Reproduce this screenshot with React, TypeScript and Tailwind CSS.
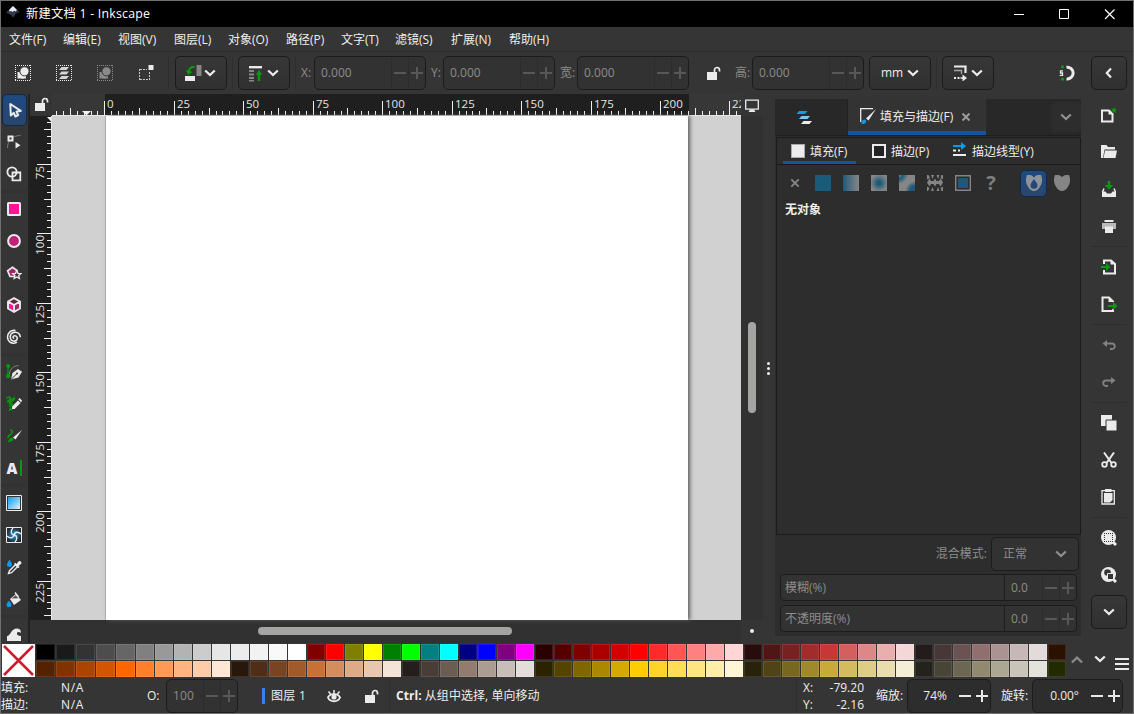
import type { ReactNode } from "react";
import clsx from "clsx";

const FG = "#ebebeb";
const GREEN = "#069a0c";
const BLUE = "#0c9bea";

const menus = [
  { label: "文件(F)", width: "w-[54px]" },
  { label: "编辑(E)", width: "w-[55px]" },
  { label: "视图(V)", width: "w-[56px]" },
  { label: "图层(L)", width: "w-[54px]" },
  { label: "对象(O)", width: "w-[58px]" },
  { label: "路径(P)", width: "w-[55px]" },
  { label: "文字(T)", width: "w-[54px]" },
  { label: "滤镜(S)", width: "w-[56px]" },
  { label: "扩展(N)", width: "w-[58px]" },
  { label: "帮助(H)", width: "w-[60px]" },
];

const paletteTop =
  "000000 1a1a1a 333333 4d4d4d 666666 808080 999999 b3b3b3 cccccc e6e6e6 ececec f2f2f2 f9f9f9 ffffff 800000 ff0000 808000 ffff00 008000 00ff00 008080 00ffff 000080 0000ff 800080 ff00ff 2b0000 550000 800000 aa0000 d40000 ff0000 ff2a2a ff5555 ff8080 ffaaaa ffd5d5 280b0b 501616 782121 a02c2c c83737 d35f5f de8787 e9afaf f4d7d7 241c1c 483737 6c5353 916f6f ac9393 c8b7b7 e3dbdb 2b1100".split(
    " ",
  );
const paletteBottom =
  "552200 803300 aa4400 d45500 ff6600 ff7f2a ff9955 ffb380 ffccaa ffe6d5 28170b 502d16 784421 a05a2c c87137 d38d5f deaa87 e9c6af f4e3d7 241f1c 483e37 6c5d53 917c6f ac9d93 c8beb7 e3dedb 2b2200 554400 806600 aa8800 d4aa00 ffcc00 ffd42a ffdd55 ffe680 ffeeaa fff6d5 28220b 504416 786721 a0892c c8ab37 d3bc5f decd87 e9ddaf f4eed7 24221c 484537 6c6753 918a6f aca793 c8c4b7 e3e2db 222b00".split(
    " ",
  );

interface IconProps {
  children: ReactNode;
  size?: number;
  className?: string;
}

function Icon({ children, size = 16, className }: IconProps) {
  return (
    <svg
      width={size}
      height={size}
      viewBox={`0 0 ${size} ${size}`}
      fill="none"
      className={clsx("shrink-0", className)}
    >
      {children}
    </svg>
  );
}

function Chevron({ color = FG, up = false, className }: { color?: string; up?: boolean; className?: string }) {
  return (
    <svg width="12" height="8" viewBox="0 0 12 8" fill="none" className={clsx("shrink-0", className)}>
      <path d={up ? "M.9 6.500 6 1.700l5.100 4.800" : "M1.200 1.500 6 6l4.800-4.500"} stroke={color} strokeWidth="2.300" />
    </svg>
  );
}

function OpenLock({ className }: { className?: string }) {
  return (
    <svg width="14" height="14" viewBox="0 0 14 14" fill="none" className={clsx("shrink-0", className)}>
      <path d="M0 6h10v8H0z" fill={FG} />
      <path d="M7.500 6.500V4a2.500 2.500 0 0 1 5 0v1.500" stroke={FG} strokeWidth="1.700" />
    </svg>
  );
}

function VSep({ className }: { className?: string }) {
  return <div className={clsx("h-[34px] w-px shrink-0 bg-[#2e2e2e]", className)} />;
}

function PlusMinus({ active = false }: { active?: boolean }) {
  const color = active ? "#e8e8e8" : "#585858";
  return (
    <>
      <div className="flex h-full w-[17px] shrink-0 items-center justify-center border-l border-[#2c2c2c]">
        <svg width="12" height="12" viewBox="0 0 12 12">
          <path d="M0 5h12v2H0z" fill={color} />
        </svg>
      </div>
      <div className="flex h-full w-[17px] shrink-0 items-center justify-center border-l border-[#2c2c2c]">
        <svg width="12" height="12" viewBox="0 0 12 12">
          <path d="M0 5h12v2H0zM5 0h2v12H5z" fill={color} />
        </svg>
      </div>
    </>
  );
}

function Spin({ value, className, active }: { value: string; className?: string; active?: boolean }) {
  return (
    <div
      className={clsx(
        "flex h-[34px] shrink-0 items-center rounded-[5px] border border-[#1c1c1c]",
        active ? "bg-[#2d2d2d] text-[#eeeeec]" : "bg-[#323232] text-[#8c8c8a]",
        className,
      )}
    >
      <span className={clsx("min-w-0 flex-1", active ? "pr-[9px] text-right" : "pl-1.5")}>{value}</span>
      <PlusMinus active={active} />
    </div>
  );
}

function ToolButton({ children, className }: { children: ReactNode; className?: string }) {
  return (
    <div
      className={clsx(
        "flex h-[34px] shrink-0 items-center rounded-[5px] border border-[#1b1b1b] bg-linear-to-b from-[#373737] to-[#303030]",
        className,
      )}
    >
      {children}
    </div>
  );
}

/* ---------- Title bar and menus ---------- */

function TitleBar() {
  return (
    <div className="flex h-[26px] shrink-0 items-center bg-black text-white">
      <svg width="14" height="14" viewBox="0 0 14 14" className="-mt-1 ml-[5px]">
        <path d="M7 1 13 6.600c.8.900-1.800 1.200-3.400 1.900L8.600 11 7 12.400 5 10 1.400 8.300C-.1 7.600.6 7 1.200 6.400z" fill="#303a4b" />
        <path d="M7 1 11 5 9.300 6.600 8 5.800 6.500 7 5 6 3.600 6.500 3 5z" fill="#e8ebef" />
      </svg>
      <span className="ml-1.5 text-[12.3px] tracking-[0.23px]">新建文档 1 - Inkscape</span>
      <svg width="112" height="20" viewBox="0 0 112 20" fill="none" stroke="#fff" className="ml-auto mr-[13px]">
        <path d="M6 10.500h10" />
        <path d="M51.500 5.500h9v9h-9z" />
        <path d="m97 5.500 9.500 9.500M106.500 5.500 97 15" strokeWidth="1.200" />
      </svg>
    </div>
  );
}

function MenuBar() {
  return (
    <div className="flex h-[25px] shrink-0 items-center border-b border-[#2d2d2d] pl-2 pt-px">
      {menus.map((menu) => (
        <span key={menu.label} className={clsx("shrink-0 whitespace-nowrap", menu.width)}>
          {menu.label}
        </span>
      ))}
    </div>
  );
}

/* ---------- Tool controls ---------- */

function DottedFrame({ color }: { color: string }) {
  return (
    <path
      d="M0 .500h16M0 15.500h16M.500 0v16M15.500 0v16"
      stroke={color}
      strokeDasharray="1 1"
    />
  );
}

function SelectionGlyph({ color }: { color: string }) {
  return (
    <Icon>
      <DottedFrame color={color} />
      <path d="M2.500 7H9v6.500H2.500z" fill={color} />
      <path d="M6 9h5v4.500H6z" fill={color} />
      <circle cx="9.500" cy="6.300" r="4.600" fill={color} stroke="#353535" />
    </Icon>
  );
}

function ControlsBar() {
  return (
    <div className="flex h-[42px] shrink-0 items-center text-[#8c8c8a]">
      <div className="ml-[14px] flex items-center">
        <SelectionGlyph color={FG} />
        <Icon className="ml-[25px]">
          <DottedFrame color={FG} />
          <path d="M5.500 2H13l-2.500 3H3zM5.500 6.500H13l-2.500 3H3zM5.500 11H13l-2.500 3H3z" fill="#d4d4d4" />
        </Icon>
        <div className="ml-[25px] flex">
          <SelectionGlyph color="#8a8a8a" />
        </div>
        <Icon className="ml-[25px]">
          <path d="M2 4.500h10M2 14.500h10M1.500 4v11M11.500 4v11" stroke="#c8c8c8" strokeDasharray="2 1" />
          <path d="M9 0h7v6H9z" fill="#353535" />
          <path d="M10.500 0h5v5h-5z" fill={FG} />
        </Icon>
      </div>
      <VSep className="ml-[14px]" />
      <ToolButton className="ml-[6px] w-[52px] pl-[9px]">
        <Icon size={18}>
          <path d="M0 12h10v5H0z" fill={FG} />
          <path d="M11.500 1h5v11h-5z" fill="#868686" />
          <path d="M9.500 3C6 2.500 4.300 4.500 4.200 7" stroke={GREEN} strokeWidth="2.200" />
          <path d="M1 5.500 7.500 8 3 11z" fill={GREEN} />
        </Icon>
        <Chevron className="ml-px" />
      </ToolButton>
      <VSep className="ml-[5px]" />
      <ToolButton className="ml-[5px] w-[52px] pl-[9px]">
        <Icon size={17}>
          <path d="M1 1h13v2.400H1z" fill={FG} />
          <path d="M1 5h5v2H1zM1 8.500h5v2H1zM1 12h5v2H1zM1 15h5v1.600H1z" fill="#878787" />
          <path d="M9.800 9h2.400v7H9.800z" fill={GREEN} />
          <path d="M11 4.500 14 10H8z" fill={GREEN} />
        </Icon>
        <Chevron className="ml-[2px]" />
      </ToolButton>
      <VSep className="ml-[5px]" />
      <span className="ml-[5px] w-[13px]">X:</span>
      <Spin value="0.000" className="w-[112px]" />
      <span className="ml-[5px] w-3">Y:</span>
      <Spin value="0.000" className="w-[112px]" />
      <span className="ml-[5px] w-[17px] whitespace-nowrap">宽:</span>
      <Spin value="0.000" className="w-[112px]" />
      <OpenLock className="ml-[18px]" />
      <span className="ml-[14px] w-[17px] whitespace-nowrap">高:</span>
      <Spin value="0.000" className="w-[112px]" />
      <ToolButton className="ml-[5px] w-[62px] pl-[11px] text-[#eeeeec]">
        mm
        <Chevron className="ml-auto mr-[11px]" />
      </ToolButton>
      <VSep className="ml-[5px]" />
      <ToolButton className="ml-[5px] w-[52px] pl-[11px]">
        <Icon>
          <path d="M0 1.500h11.500V8" stroke={FG} strokeWidth="2.200" />
          <path d="M0 5.500h7.500V9" stroke="#a8a8a8" strokeWidth="1.300" />
          <path d="M0 12h2v2H0zM3.500 12h2v2h-2zM6.500 12.200h3v1.600h-3zM8.500 9.500l4.500 3.500-4.500 3.500z" fill={FG} />
        </Icon>
        <Chevron className="ml-px" />
      </ToolButton>
      <Icon size={18} className="ml-[64px]">
        <path d="M8.500 3.200a5.900 5.900 0 1 1 0 11.700" stroke={FG} strokeWidth="3" />
        <circle cx="4.500" cy="2.800" r="1.600" fill={GREEN} />
        <circle cx="4.500" cy="15.200" r="1.600" fill={GREEN} />
        <path d="M5 6.800H2.500V9h2v2.400H1.700" stroke={FG} strokeWidth="1.300" />
      </Icon>
      <ToolButton className="ml-[15px] w-9 justify-center">
        <Icon size={12} className="-ml-px">
          <path d="M8 1.500 3.800 6 8 10.500" stroke={FG} strokeWidth="2.200" />
        </Icon>
      </ToolButton>
    </div>
  );
}

/* ---------- Toolbox ---------- */

const toolGroups: ReactNode[][] = [
  [
    <Icon key="selector">
      <path d="m3.300 2 .500 11.500 3-2.700 1.600 3.700 2.800-1.300-1.700-3.600 4.300-.700z" stroke={FG} strokeWidth="2" strokeLinejoin="round" />
    </Icon>,
    <Icon key="node">
      <path d="M1.500 14C1.500 8 5 1.500 14.500 1.500" stroke="#797979" />
      <path d="M2.500 2.500h4v4h-4z" fill="#353535" stroke={FG} strokeWidth="2" />
      <path d="m9.500 8 5 3.300-5 3.200z" fill={FG} />
    </Icon>,
    <Icon key="shape-builder">
      <circle cx="6" cy="6" r="4.600" stroke={FG} strokeWidth="1.900" />
      <path d="M6.500 6.500h7.800v7.800H6.500z" stroke={FG} strokeWidth="1.800" />
    </Icon>,
  ],
  [
    <Icon key="rect">
      <rect x="2" y="2" width="12" height="12" rx=".500" fill="#ff1493" stroke={FG} strokeWidth="2" />
    </Icon>,
    <Icon key="ellipse">
      <circle cx="8" cy="8" r="5.900" fill="#c42079" stroke={FG} strokeWidth="2" />
    </Icon>,
    <Icon key="star">
      <path d="M6.500 2.200 11 5.600 9.500 11.500H4L1.600 5.900z" fill="#a0246a" stroke={FG} strokeWidth="1.700" />
      <path d="m10.800 5.500 1.200 2.800 3 .200-2.300 2 .700 3-2.600-1.600L8.200 13.500l.700-3-2.300-2 3-.200z" fill="#5c2747" stroke={FG} strokeWidth="1.300" />
    </Icon>,
    <Icon key="box">
      <path d="m8 1.200 6 3.300v7L8 15l-6-3.500v-7z" fill="#63263f" />
      <path d="M2 4.500 8 8v7l-6-3.500z" fill="#ff1493" />
      <path d="M14 4.500 8 8v7l6-3.500z" fill="#ab2467" />
      <path d="m8 1.200 6 3.300v7L8 15l-6-3.500v-7zM2 4.500 8 8l6-3.500M8 8v7" stroke={FG} strokeWidth="1.900" strokeLinejoin="round" />
    </Icon>,
    <Icon key="spiral">
      <path d="M8.200 9.200c-1.500 0-1.800-2.300.300-2.500 2.400-.200 3.400 2.300 2.300 4-1.500 2.300-5.300 1.700-6.300-1-1.200-3.600 1.300-6.600 4.800-6.500 2.800.100 4.900 2.200 5 5M9.500 1.500C4.800.800 1.200 4 1.500 8.500c.300 3.800 3.500 6 6.500 5.700 1-.100 2-.300 3-1" stroke={FG} strokeWidth="1.600" />
    </Icon>,
  ],
  [
    <Icon key="pen">
      <path d="M2 3v9" stroke={GREEN} strokeWidth="1.300" />
      <circle cx="2.200" cy="2" r="2" fill={GREEN} />
      <path d="M.200 10h4v4h-4z" fill={GREEN} />
      <path d="M3.500 10C4 4.500 7.500 2 12.500 1.500" stroke="#808080" />
      <path d="M5 15.500 6.500 9 12 5l4 2.800-3.500 5.700z" fill={FG} />
      <path d="m5.500 15 5-5" stroke="#353535" />
      <circle cx="11" cy="9.500" r="1" fill="#353535" />
    </Icon>,
    <Icon key="pencil">
      <path d="M.500 2.500C3-.500 6 1.500 3.500 3.500S1 6 3 5.500 8 .500 8.500 2.500 3 6 3.500 7.800 7 6 6 8.500 3.500 10 3.500 11" stroke={GREEN} strokeWidth="1.500" />
      <path d="m6 10.500 6-6 2.600 2.600-6 6H6z" fill={FG} />
      <path d="m12.300 3.300 1.200-1.300 2.800 2.700-1.300 1.500z" fill={FG} />
      <path d="m2.500 15 1.500-4 3 3z" fill={GREEN} />
    </Icon>,
    <Icon key="calligraphy">
      <path d="M4 2c3 0 3 2 1 4-2 1.800-4 2.500-2.500 4" stroke={GREEN} strokeWidth="1.600" />
      <path d="M2 14c1-3.500 2.500-5 5-4 1.500 2-1.500 4-5 4z" fill={GREEN} />
      <path d="m7 9.500 9-7.500-6.500 9.500z" fill={FG} />
    </Icon>,
    <Icon key="text" size={18}>
      <text x="1.500" y="14.500" fill={FG} fontFamily="Open Sans, sans-serif" fontSize="15" fontWeight="800">
        A
      </text>
      <path d="M15 1h2v16h-2z" fill={GREEN} />
    </Icon>,
  ],
  [
    <Icon key="gradient">
      <defs>
        <linearGradient id="tool-gradient" x2="1" y2="1">
          <stop stopColor="#0c9bea" />
          <stop offset="1" stopColor="#e4f0f8" />
        </linearGradient>
      </defs>
      <path d="M.500.500h15v15H.500z" fill="#353535" stroke={FG} />
      <path d="M2 2h12v12H2z" fill="url(#tool-gradient)" />
    </Icon>,
    <Icon key="mesh">
      <defs>
        <radialGradient id="tool-mesh">
          <stop stopColor="#15a4f5" />
          <stop offset="1" stopColor="#252b31" />
        </radialGradient>
      </defs>
      <path d="M.500.500h15v15H.500z" fill="url(#tool-mesh)" stroke={FG} />
      <path d="M8 8C4.500 7.500 4.500 3.500 7 1M8 8c3.500.500 3.500 4.500 1 7M8 8c.500-3.500 4.500-3.500 7-1M8 8c-.500 3.500-4.500 3.500-7 1" stroke={FG} strokeWidth="1.300" />
    </Icon>,
    <Icon key="dropper">
      <path d="M3.500.500C5 3.500 6 4.200 6 5.500a2.500 2.500 0 0 1-5 0c0-1.300 1-2 2.500-5z" fill={BLUE} />
      <path d="m2.500 14.500 1-2.800 6-6 2 2-6 6z" stroke={FG} strokeWidth="1.400" />
      <path d="m8 5 1.200-1.200L10.500 5l2-2.500c1.500-1.500 4 .800 2.500 2.500L12.500 7l1 1-1.200 1.300z" fill={FG} />
    </Icon>,
    <Icon key="bucket">
      <path d="m4 8 6-5 5 6-7 5z" fill={FG} />
      <path d="m5.500 7.600 4.300-3.400 2.700 3.100z" fill="#555" />
      <path d="m9 1.500 3.500 4.500" stroke={FG} strokeWidth="1.400" />
      <path d="M3 9.500c1.500 2.500 2.500 3 2.500 4.300a2.500 2.500 0 0 1-5 0c0-1.300 1-1.800 2.500-4.300z" fill={BLUE} />
    </Icon>,
  ],
  [
    <Icon key="tweak">
      <path d="M1 15V10c3.500.200 4-7.500 10-7.500 3.500.200 4.500 3 3.500 4.500-.800-1.500-3.500-1.500-3.500.500 0 1.600 1.200 2.500 4 2.500v5z" fill={FG} />
    </Icon>,
  ],
];

function Toolbox() {
  return (
    <div className="h-[549px] w-[29px] shrink-0 overflow-hidden border-r-2 border-[#222]">
      <div className="w-[26px]">
        {toolGroups.map((group, groupIndex) => (
          <div key={groupIndex} className={groupIndex > 0 ? "border-t-3 border-[#323232]" : ""}>
            {group.map((tool, index) => (
              <div
                key={index}
                className={clsx(
                  "flex h-8 items-center justify-center",
                  groupIndex === 0 &&
                    index === 0 &&
                    "ml-px rounded-[5px] border border-[#10294a] bg-linear-to-b from-[#1d4a80] to-[#29466d]",
                )}
              >
                {tool}
              </div>
            ))}
          </div>
        ))}
      </div>
    </div>
  );
}

/* ---------- Canvas and rulers ---------- */

// 25 mm is 69.45 px at 74% zoom
const MAJOR = 69.45;

function HorizontalRuler() {
  const ticks = [];
  for (let i = -7; i < 92; i++) {
    const x = Math.round(104.4 + (i * MAJOR) / 10) - 52;
    if (x < 0 || x > 688) continue;
    const top = i % 10 === 0 ? 7 : i % 5 === 0 ? 14 : 17;
    ticks.push(<path key={i} d={`M${x + 0.5} ${top}V21`} />);
  }
  return (
    <svg width="689" height="22" viewBox="0 0 689 22" className="shrink-0">
      <path d="M0 0h689v22H0z" fill="#373737" />
      <path d="M53 0h584v22H53z" fill="#1f1f1f" />
      <path d="M0 21h689v1H0z" fill="#e6e6e6" />
      <g stroke="#f0f0f0">{ticks}</g>
      <path d="M30 17h9l-4.500 4.500z" fill="#f0f0f0" />
      <g fill="#e4e4e4" fontSize="11.500">
        {Array.from({ length: 10 }, (_, i) => (
          <text key={i} x={Math.round(104.4 + i * MAJOR) - 52 + 3} y="14">
            {i * 25}
          </text>
        ))}
      </g>
    </svg>
  );
}

function VerticalRuler() {
  const ticks = [];
  for (let i = -7; i < 66; i++) {
    const y = Math.round(164 + (i * MAJOR) / 10) - 116;
    if (y < 0 || y > 503) continue;
    const left = i % 10 === 0 ? 7 : i % 5 === 0 ? 14 : 17;
    ticks.push(<path key={i} d={`M${left} ${y + 0.5}H21`} />);
  }
  return (
    <svg width="22" height="504" viewBox="0 0 22 504" className="shrink-0">
      <path d="M0 0h22v504H0z" fill="#1f1f1f" />
      <path d="M21 0h1v504h-1z" fill="#e6e6e6" />
      <g stroke="#f0f0f0">{ticks}</g>
      <path d="M17 1h4v4.500z" fill="#f0f0f0" />
      <g fill="#e4e4e4" fontSize="11.500">
        {Array.from({ length: 7 }, (_, i) => {
          const value = 75 + i * 25;
          const y = Math.round(164 + i * MAJOR) - 116;
          return (
            <text key={value} transform={`translate(14 ${y + 2}) rotate(-90)`} textAnchor="end">
              {value}
            </text>
          );
        })}
      </g>
    </svg>
  );
}

function CanvasArea() {
  return (
    <div className="flex w-[733px] shrink-0 flex-col bg-[#313131]">
      <div className="flex h-[22px]">
        <div className="flex w-[22px] shrink-0 items-center justify-center bg-[#343434] pl-0.5">
          <OpenLock className="-mt-0.5" />
        </div>
        <HorizontalRuler />
        <div className="flex w-[22px] shrink-0 items-center justify-center bg-[#353535]">
          <Icon className="-mt-px">
            <path d="M1.700 3.200h12.600v9H1.700z" stroke={FG} strokeWidth="1.300" />
            <path d="M6 12.500h4l1.500 2.500h-7z" fill={FG} />
          </Icon>
        </div>
      </div>
      <div className="flex h-[504px]">
        <VerticalRuler />
        <div className="h-full w-[689px] shrink-0 bg-[#d1d1d1] pl-[54px]">
          <div className="h-full w-[582px] bg-white shadow-[2px_0_4px_#606060,-1px_0_0_#b4b4b4]" />
        </div>
        <div className="w-[22px] shrink-0 pl-[7px] pt-[206px]">
          <div className="h-[91px] w-2 rounded-full bg-[#a4a4a2]" />
        </div>
      </div>
      <div className="flex h-[23px]">
        <div className="ml-[228px] mt-[7px] h-2 w-[254px] rounded-full bg-[#a4a4a2]" />
        <div className="ml-auto flex w-[22px] justify-center bg-[#353535] pt-[9px]">
          <div className="size-1 rounded-full bg-[#eeeeec]" />
        </div>
      </div>
    </div>
  );
}

/* ---------- Fill and stroke dock ---------- */

function DockTabs() {
  return (
    <div className="flex h-[37px] shrink-0 border-b border-[#1e1e1e] bg-[#282828]">
      <div className="flex w-[73px] items-center border-r border-[#222] pl-[21px]">
        <Icon>
          <path d="M3 2h8.500L9 5H.500z" fill={BLUE} />
          <path d="M5.500 7H14l-2.500 3H3z" fill="#7cc7ed" />
          <path d="M7.500 12H16l-2.500 3H5z" fill={FG} />
        </Icon>
      </div>
      <div className="flex w-[138px] items-center border-b-4 border-[#15539e] bg-[#333] pl-3 pt-0.5">
        <Icon>
          <path d="M.700 14V.700H13" stroke={FG} strokeWidth="1.300" />
          <path d="M6 10.500 16 1 8.500 12.500z" fill={FG} />
          <path d="M1 15.500c1-.500.500-3.500 3.500-4 2 0 2 3 .500 4-1 .500-3 .500-4 0z" fill={BLUE} />
        </Icon>
        <span className="ml-1 mt-px whitespace-nowrap">填充与描边(F)</span>
        <svg width="8" height="8" viewBox="0 0 8 8" className="ml-[9px] mt-px">
          <path d="m.500.500 7 7M7.500.500l-7 7" stroke="#9b9b9b" strokeWidth="2" />
        </svg>
      </div>
      <div className="ml-auto mt-[3px] flex h-[30px] w-[30px] items-center justify-center rounded-[5px] bg-[#2d2d2d]">
        <Chevron color="#909090" />
      </div>
    </div>
  );
}

function PaintTabs() {
  return (
    <div className="flex h-[27px] shrink-0 items-stretch border-b border-[#1b1b1b] pl-1.5">
      <div className="flex w-[73px] items-center border-b-3 border-[#15539e] pl-2">
        <div className="mt-0.5 size-3.5 border border-[#aaa] bg-[#ededed]" />
        <span className="ml-[5px] mt-1 whitespace-nowrap">填充(F)</span>
      </div>
      <div className="flex w-[80px] items-center pl-4">
        <div className="-mt-px size-3.5 border-2 border-[#ebebeb] bg-[#222]" />
        <span className="ml-[5px] mt-px whitespace-nowrap">描边(P)</span>
      </div>
      <div className="flex items-center pl-4">
        <Icon className="-mt-0.5">
          <path d="M1 3h9v2H1zM9 0l5 4-5 4z" fill={BLUE} />
          <path d="M1 7.500h3v2H1zM6 7.500h2v2H6zM1 12h13v2H1z" fill={FG} />
        </Icon>
        <span className="ml-1 mt-px whitespace-nowrap">描边线型(Y)</span>
      </div>
    </div>
  );
}

function PaintButtons() {
  return (
    <div className="flex h-9 shrink-0 items-center">
      <Icon className="ml-[10px]">
        <path d="m4.300 4.300 7.400 7.400M11.700 4.300l-7.400 7.400" stroke="#858585" strokeWidth="1.900" />
      </Icon>
      <div className="ml-3 size-4 bg-[#1b5a7a]" />
      <div className="ml-3 size-4 bg-linear-to-r from-[#1b5a7a] to-[#858585]" />
      <div className="ml-3 size-4 bg-[radial-gradient(circle,#1b5a7a_15%,#858585_75%)]" />
      <Icon className="ml-3">
        <defs>
          <radialGradient id="mesh-a" gradientUnits="userSpaceOnUse" cx="0" cy="0" r="9">
            <stop stopColor="#858585" />
            <stop offset=".4" stopColor="#1b5a7a" />
            <stop offset="1" stopColor="#858585" />
          </radialGradient>
          <radialGradient id="mesh-b" gradientUnits="userSpaceOnUse" cx="16" cy="16" r="10">
            <stop stopColor="#1b5a7a" />
            <stop offset=".5" stopColor="#1b5a7a" />
            <stop offset="1" stopColor="#858585" />
          </radialGradient>
        </defs>
        <path d="M0 0h16v16H0z" fill="#858585" />
        <path d="M0 0h8.500c0 5-4 8-8.500 8.500z" fill="url(#mesh-a)" />
        <path d="M16 16H6.500C7 11 11 7 16 6.500z" fill="url(#mesh-b)" />
      </Icon>
      <Icon className="ml-3">
        <path
          d="m2.500 3.500 2.500 4-2.500 4-2.500-4zM8 3.500l2.500 4-2.500 4-2.500-4zM13.500 3.500l2.500 4-2.500 4-2.500-4zM0 0h1.500L3 3 0 4.500zM4 0h3L5.500 4zM9.500 0h3L11 4zM14.500 0H16v4.500L13.500 3zM0 16v-4.500L2.500 13 1 16zM4 16l1.500-4L7 16zM9.500 16l1.500-4 1.500 4zM14.500 16l-1-3 2.500-1.500V16zM1 6h14v3H1z"
          fill="#858585"
        />
      </Icon>
      <Icon className="ml-3">
        <path d="M.700.700h14.600v14.600H.700z" stroke="#858585" strokeWidth="1.400" />
        <path d="M3 3h10v10H3z" fill="#1b5a7a" />
      </Icon>
      <span className="ml-3 w-4 text-center font-['Open_Sans'] text-[20px] font-bold leading-none text-[#7d7d7d]">?</span>
      <div className="ml-[21px] flex h-[27px] w-[27px] items-center justify-center rounded-[5px] border border-[#10294a] bg-linear-to-b from-[#1d4a80] to-[#29466d]">
        <Icon>
          <path
            d="M1 0c3-.500 4.500 0 7 2.500C10.500 0 12-.500 15 0c2 5 1 9-1.500 12.500C12 14.800 10.500 16 8 16s-4-1.200-5.500-3.500C0 9-1 5 1 0zM8 4C6.500 6.500 4.500 8 4.500 10.300a3.500 3.500 0 0 0 7 0C11.500 8 9.500 6.500 8 4z"
            fill="#8d949b"
            fillRule="evenodd"
          />
        </Icon>
      </div>
      <Icon className="ml-[7px]">
        <path d="M1 0c3-.500 5 0 7 2 2-2 4-2.500 7-2 2 5 1 9-1.500 12.500C12 14.800 10.500 16 8 16s-4-1.200-5.500-3.500C0 9-1 5 1 0z" fill="#858585" />
      </Icon>
    </div>
  );
}

function DockSlider({ label }: { label: string }) {
  return (
    <div className="flex h-[27px] items-center rounded-[4px] border border-[#1c1c1c] bg-[#323232]">
      <span className="h-full w-[224px] border-r border-[#1c1c1c] pl-1 leading-[25px]">{label}</span>
      <span className="flex-1 pl-1.5">0.0</span>
      <PlusMinus />
    </div>
  );
}

function Dock() {
  return (
    <div className="mt-[5px] flex h-[537px] w-[306px] shrink-0 flex-col bg-[#2d2d2d]">
      <DockTabs />
      <div className="ml-px mt-px flex h-[398px] w-[305px] shrink-0 flex-col border border-[#1b1b1b]">
        <PaintTabs />
        <PaintButtons />
        <span className="ml-2 mt-px text-[12px] font-bold">无对象</span>
      </div>
      <div className="mt-px flex h-[36px] items-center justify-end pr-0.5 text-[#8c8c8a]">
        <span>混合模式:</span>
        <div className="ml-1 flex h-[34px] w-[88px] items-center rounded-[5px] border border-[#1c1c1c] bg-[#323232] pl-[11px]">
          正常
          <Chevron color="#909090" className="ml-auto mr-[11px]" />
        </div>
      </div>
      <div className="ml-[5px] mt-[2px] flex w-[297px] flex-col gap-1 text-[#8c8c8a]">
        <DockSlider label="模糊(%)" />
        <DockSlider label="不透明度(%)" />
      </div>
    </div>
  );
}

/* ---------- Command bar ---------- */

const commandGroups: ReactNode[][] = [
  [
    <Icon key="new">
      <path d="M1 3.500h7L11.500 7v7.500H1z" stroke={FG} strokeWidth="2" />
      <path d="M7.500 3v4.500H12z" fill={FG} />
      <path d="m13 0 .900 2 2.100.300-1.500 1.500.400 2.200-1.900-1-1.900 1 .400-2.200L10 2.300 12.100 2z" fill={GREEN} />
    </Icon>,
    <Icon key="open">
      <path d="M0 1h5.500L7 3h7v2.500H3.500L2 14H0z" fill={FG} />
      <path d="M4 6.500h12L14.500 14H2.500z" fill={FG} />
    </Icon>,
    <Icon key="save">
      <path d="M6.800 0h2.400v4h3L8 8.800 3.800 4h3z" fill={GREEN} />
      <path d="M3 7.500 1.500 11M13 7.500l1.500 3.500" stroke={FG} strokeWidth="1.500" />
      <path d="M1 10.500h3.500L6 12.500h4l1.500-2H15V16H1z" fill={FG} />
    </Icon>,
    <Icon key="print">
      <path d="M3.500 2h9v2h-9z" fill={FG} />
      <path d="M1 5h14v6H1z" fill="#b9b9b9" />
      <path d="M4 8.500h8V15H4z" fill={FG} />
    </Icon>,
  ],
  [
    <Icon key="import">
      <path d="M3 5V1.500h7L14 5v9.500H3V11" stroke={FG} strokeWidth="2" />
      <path d="M9.500 1v4.500H14z" fill={FG} />
      <path d="M0 7h5V4l4.500 4-4.500 4V9H0z" fill={GREEN} />
    </Icon>,
    <Icon key="export">
      <path d="M12 6V5.500L8 1.500H1.500V15H12v-2" stroke={FG} strokeWidth="2" />
      <path d="M7.500 1v5H12z" fill={FG} />
      <path d="M7 9h5V6l4.500 4-4.500 4v-3H7z" fill={GREEN} />
    </Icon>,
  ],
  [
    <Icon key="undo">
      <path d="M4 6.500h7a2.700 2.700 0 0 1 0 5.500H9" stroke="#818181" strokeWidth="1.900" />
      <path d="M1.500 6.500 6 3v7z" fill="#818181" />
    </Icon>,
    <Icon key="redo">
      <path d="M12 6.500H5a2.700 2.700 0 0 0 0 5.500h2" stroke="#818181" strokeWidth="1.900" />
      <path d="M14.500 6.500 10 3v7z" fill="#818181" />
    </Icon>,
  ],
  [
    <Icon key="copy">
      <path d="M0 0h11v11H0z" fill={FG} />
      <path d="M5 5h11v11H5z" fill={FG} stroke="#353535" />
    </Icon>,
    <Icon key="cut">
      <path d="m3 .500 7.500 10.500M13 .500 5.500 11" stroke={FG} strokeWidth="2" />
      <circle cx="3.500" cy="12.500" r="2.300" stroke={FG} strokeWidth="1.800" />
      <circle cx="12.500" cy="12.500" r="2.300" stroke={FG} strokeWidth="1.800" />
    </Icon>,
    <Icon key="paste">
      <path d="M1 1.700h12.300V15H1z" stroke={FG} strokeWidth="1.300" />
      <path d="M4 0h6.500v3H4z" fill={FG} />
      <path d="M3 4h8.500v7L9 13.500H3z" fill={FG} />
    </Icon>,
  ],
  [
    <Icon key="zoom-selection">
      <circle cx="7.500" cy="7.500" r="7.500" fill={FG} />
      <path d="m11 11 4 4" stroke={FG} strokeWidth="3" />
      <path d="M3 3.500h9M3 11.500h9M3.500 3v9M11.500 3v9" stroke="#353535" strokeDasharray="1 1" />
    </Icon>,
    <Icon key="zoom-drawing">
      <circle cx="7.500" cy="7.500" r="7.500" fill={FG} />
      <path d="m11 11 4 4" stroke={FG} strokeWidth="3" />
      <circle cx="6.500" cy="5.500" r="3.300" fill="#353535" />
      <path d="M6.500 6.500h6v6h-6z" fill="#353535" stroke={FG} />
    </Icon>,
  ],
];

function CommandBar() {
  return (
    <div className="ml-[10px] flex w-9 shrink-0 flex-col pt-[2px]">
      {commandGroups.map((group, groupIndex) => (
        <div key={groupIndex}>
          {groupIndex > 0 && (
            <div className="flex h-1 items-center">
              <div className="h-px w-full bg-[#2e2e2e]" />
            </div>
          )}
          {group.map((command, index) => (
            <div key={index} className="flex h-[37px] items-center justify-center">
              {command}
            </div>
          ))}
        </div>
      ))}
      <ToolButton className="mt-0.5 w-9 justify-center">
        <Chevron />
      </ToolButton>
    </div>
  );
}

/* ---------- Palette and status bar ---------- */

function SwatchRow({ colors }: { colors: string[] }) {
  return (
    <div className="flex h-4">
      {colors.map((color, i) => (
        <div
          key={i}
          className={clsx(
            "mr-px h-4 shrink-0 border border-white/10",
            i < 5 ? "w-[19px]" : "w-[18px]",
          )}
          style={{ backgroundColor: `#${color}` }}
        />
      ))}
    </div>
  );
}

function Palette() {
  return (
    <div className="flex h-9 shrink-0 pl-px pt-px">
      <svg width="33" height="33" viewBox="0 0 33 33" className="mr-px shrink-0">
        <path d="M0 0h33v33H0z" fill="#fff" />
        <path d="m2 2 29 29M31 2 2 31" stroke="#c5202f" strokeWidth="2.500" />
      </svg>
      <div className="flex w-[1031px] shrink-0 flex-col gap-px">
        <SwatchRow colors={paletteTop} />
        <SwatchRow colors={paletteBottom} />
      </div>
      <Chevron up color="#8a8a8a" className="ml-1 mt-3" />
      <Chevron className="ml-[11px] mt-[11px]" />
      <svg width="14" height="13" viewBox="0 0 14 13" className="ml-[9px] mt-[14px]">
        <path d="M0 0h14v2H0zM0 5h14v2H0zM0 10h14v2H0z" fill={FG} />
      </svg>
    </div>
  );
}

function StatusBar() {
  return (
    <div className="flex h-[34px] shrink-0 items-center whitespace-nowrap">
      <div className="w-[60px] leading-[17px]">
        <div>填充:</div>
        <div>描边:</div>
      </div>
      <div className="w-[86px] leading-[17px] tracking-[0.6px]">
        <div>N/A</div>
        <div>N/A</div>
      </div>
      <span className="w-[19px]">O:</span>
      <Spin value="100" className="w-[72px] tracking-[0.2px]" />
      <div className="ml-6 h-4 w-[3px] bg-[#3d7eef]" />
      <span className="ml-1.5 w-[55px] tracking-[0.3px]">图层 1</span>
      <Icon>
        <path d="M2 9.500c2-4.500 10-4.500 12 0-2 5-10 5-12 0z" stroke={FG} strokeWidth="1.900" />
        <circle cx="8" cy="9" r="2.600" fill={FG} />
        <path d="M8 2v4M2.500 3.500 4.500 6M13.500 3.500 11.500 6" stroke={FG} strokeWidth="1.500" />
      </Icon>
      <OpenLock className="ml-[23px]" />
      <VSep className="ml-[10px] h-[22px]" />
      <span className="ml-1.5 w-[400px] tracking-[0.05px]">
        <b>Ctrl:</b> 从组中选择, 单向移动
      </span>
      <VSep className="h-[22px]" />
      <div className="ml-1.5 w-[61px] leading-[17px]">
        <div className="flex justify-between">
          <span>X:</span>
          <span>-79.20</span>
        </div>
        <div className="flex justify-between">
          <span>Y:</span>
          <span>-2.16</span>
        </div>
      </div>
      <span className="ml-3 w-[31px]">缩放:</span>
      <Spin value="74%" active className="w-[84px]" />
      <span className="ml-[10px] w-[31px]">旋转:</span>
      <Spin value="0.00°" active className="w-[91px]" />
    </div>
  );
}

export default function App() {
  return (
    <div className="flex h-[714px] w-[1134px] flex-col overflow-hidden border border-[#707070] bg-[#353535] font-['Open_Sans','Noto_Sans_CJK_SC',sans-serif] text-[12px] leading-4 text-[#eeeeec]">
      <TitleBar />
      <MenuBar />
      <ControlsBar />
      <div className="flex h-[549px] shrink-0">
        <Toolbox />
        <CanvasArea />
        <div className="flex w-3 shrink-0 flex-col items-center justify-center gap-0.5 pr-px">
          <div className="size-[3px] rounded-full bg-[#eeeeec]" />
          <div className="size-[3px] rounded-full bg-[#eeeeec]" />
          <div className="size-[3px] rounded-full bg-[#eeeeec]" />
        </div>
        <Dock />
        <CommandBar />
      </div>
      <Palette />
      <StatusBar />
    </div>
  );
}
